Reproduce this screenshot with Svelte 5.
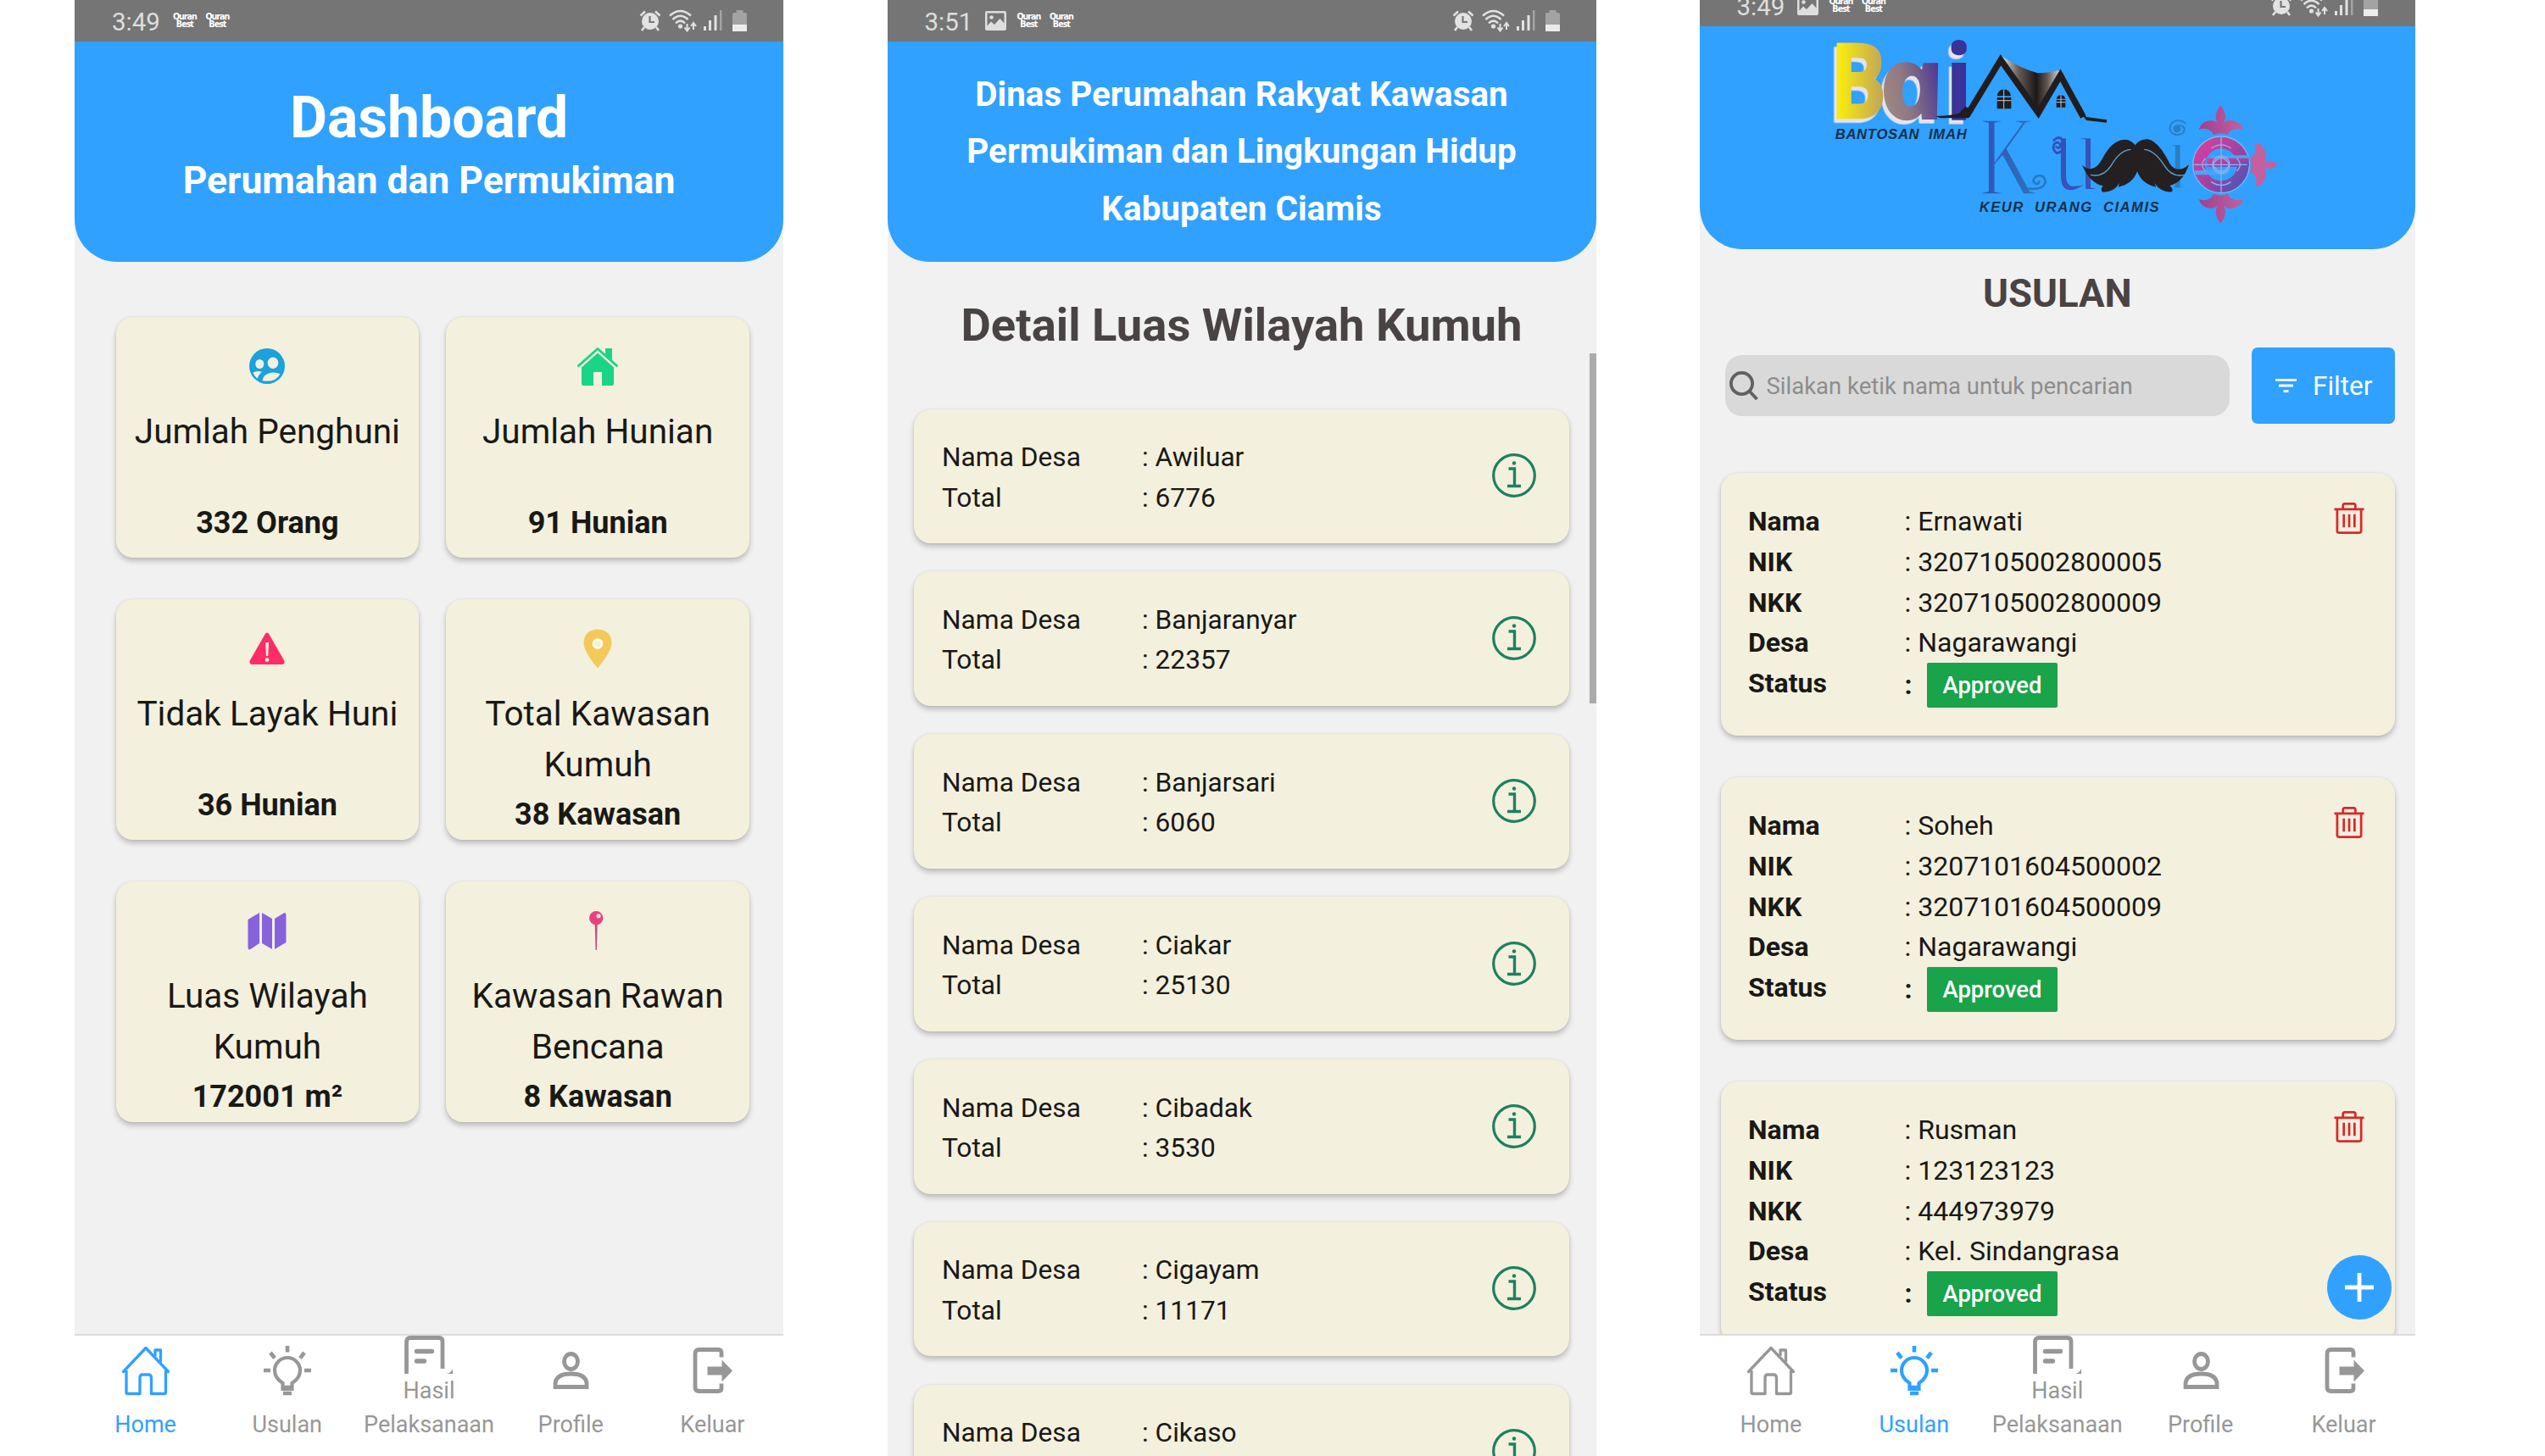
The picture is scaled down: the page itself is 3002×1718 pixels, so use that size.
<script>
  const stats = [
    { icon: 'people', label: ['Jumlah Penghuni'], value: '332 Orang' },
    { icon: 'house', label: ['Jumlah Hunian'], value: '91 Hunian' },
    { icon: 'warning', label: ['Tidak Layak Huni'], value: '36 Hunian' },
    { icon: 'place', label: ['Total Kawasan', 'Kumuh'], value: '38 Kawasan' },
    { icon: 'map', label: ['Luas Wilayah', 'Kumuh'], value: '172001 m²' },
    { icon: 'pushpin', label: ['Kawasan Rawan', 'Bencana'], value: '8 Kawasan' }
  ];

  const villages = [
    { name: 'Awiluar', total: '6776' },
    { name: 'Banjaranyar', total: '22357' },
    { name: 'Banjarsari', total: '6060' },
    { name: 'Ciakar', total: '25130' },
    { name: 'Cibadak', total: '3530' },
    { name: 'Cigayam', total: '11171' },
    { name: 'Cikaso', total: '' }
  ];

  const proposals = [
    { nama: 'Ernawati', nik: '3207105002800005', nkk: '3207105002800009', desa: 'Nagarawangi' },
    { nama: 'Soheh', nik: '3207101604500002', nkk: '3207101604500009', desa: 'Nagarawangi' },
    { nama: 'Rusman', nik: '123123123', nkk: '444973979', desa: 'Kel. Sindangrasa' }
  ];

  const tabs = ['Home', 'Usulan', 'Pelaksanaan', 'Profile', 'Keluar'];
</script>

{#snippet statusBar(time, picture)}
  <div class="status">
    <span class="time">{time}</span>
    {#if picture}
      <svg class="pic" viewBox="0 0 25 23">
        <path fill="#dedede" fill-rule="evenodd" d="M2 0h21q2 0 2 2v19q0 2-2 2H2q-2 0-2-2V2Q0 0 2 0ZM2.500 17.500l4.500-5 4 3.500 6.500-7 5 5.500V2.500H2.500ZM7.500 5.200a2.300 2.300 0 1 1 0 4.600a2.300 2.300 0 0 1 0-4.600Z" />
      </svg>
    {/if}
    <span class="quran"><b>Quran</b><b>Best</b></span>
    <span class="quran"><b>Quran</b><b>Best</b></span>
    <span class="fill"></span>
    <svg class="alarm" viewBox="0 0 26 25">
      <path d="M1.500 6.500 7 1.500M24.500 6.500 19 1.500M6 20l-3 4M20 20l3 4" stroke="#e2e2e2" stroke-width="2.600" fill="none" />
      <circle cx="13" cy="13" r="10" fill="#e2e2e2" />
      <path d="M12.500 7v7h5.500" stroke="#777" stroke-width="2.200" fill="none" />
    </svg>
    <svg class="wifi" viewBox="0 0 33 27">
      <g fill="none" stroke="#e2e2e2" stroke-width="2.500">
        <path d="M1 7.500Q13.500-3.500 26 7.500M4.500 12Q13.500 3.500 22.500 12M8 16.300Q13.500 11 19 16.300" />
      </g>
      <circle cx="13.500" cy="20" r="2.600" fill="#e2e2e2" />
      <path d="M21.500 17v8M18.500 21.500l3 4 3-4M29 24v-8M26 20l3-4 3 4" stroke="#e2e2e2" stroke-width="2" fill="none" />
    </svg>
    <svg class="signal" viewBox="0 0 22 24">
      <path fill="#e2e2e2" d="M0 19h3v5H0zM6 12h3v12H6zM12.500 6h3v18h-3z" />
      <path fill="#a3a3a3" d="M19 0h2.500v24H19z" />
    </svg>
    <svg class="battery" viewBox="0 0 17 25">
      <path fill="#a3a3a3" d="M4.500 0h8v3H15q2 0 2 2v13H0V5q0-2 2-2h2.500z" />
      <path fill="#ececec" d="M0 17h17v8H0z" />
    </svg>
  </div>
{/snippet}

{#snippet statIcon(name)}
  <svg class="stat-icon" viewBox="0 0 48 48">
    {#if name === 'people'}
      <circle cx="24" cy="24" r="21" fill="#1ba1dc" />
      <ellipse cx="31" cy="20.300" rx="6.300" ry="6.800" fill="#f3f0df" />
      <ellipse cx="15.300" cy="21.500" rx="5" ry="5.500" fill="#f3f0df" />
      <path fill="#f3f0df" d="M7.500 31.500q5-2.600 10.500-.700-3.500 2.500-5.500 8-4-3-5-7.300ZM18.500 41.300q1-7 7-8.600 7-2.700 14 .500-5.500 10.500-21 8.100Z" />
    {:else if name === 'house'}
      <path fill="none" stroke="#1ad488" stroke-width="2.800" stroke-linejoin="round" d="M.500 24.500 24 3.500l23.500 21" />
      <path fill="#1ad488" d="M24 8.500 43 25.500V45q0 2-2 2H29V31H19v16H7q-2 0-2-2V25.500ZM33 3h8v14l-8-7z" />
    {:else if name === 'warning'}
      <path fill="#ff2d67" d="M24 5.500q1.500 0 2.500 2L44 38q2 4-2 5H6q-4-1-2-5L21.500 7.500q1-2 2.500-2Z" />
      <path fill="#f3f0df" d="M22.200 17h3.800l-.700 16h-2.400z" /><circle cx="24" cy="37.500" r="2.300" fill="#f3f0df" />
    {:else if name === 'place'}
      <path fill="#f3ca5a" fill-rule="evenodd" d="M24 1.500q16.500 1 16.500 17Q40 28 24 47.500 8 28 7.500 18.500q0-16 16.500-17Zm0 11.500a5.500 5.500 0 1 0 0 11a5.500 5.500 0 0 0 0-11Z" />
      <circle cx="24" cy="18.500" r="5" fill="none" stroke="#fffbe8" stroke-width="2.600" />
    {:else if name === 'map'}
      <path fill="#8762dc" d="M1.500 11 15 3v36L4.500 46q-3 1.500-3-2ZM18 3l12 7v36l-12-7ZM33 10l10.500-6.500Q46.500 2 46.500 6v32L33 46Z" />
    {:else}
      <path fill="#c24b86" d="M20.700 14h3l-.800 33h-1.400z" />
      <circle cx="22.200" cy="9.300" r="8.200" fill="#e8437e" /><circle cx="25" cy="6.800" r="2.600" fill="#fbd5e2" />
    {/if}
  </svg>
{/snippet}

{#snippet navBar(active)}
  <nav class="nav">
    {#each tabs as tab}
      <div class={['tab', { active: tab === active, double: tab === 'Pelaksanaan' }]}>
        {#if tab === 'Home'}
          <svg class="tab-icon" viewBox="0 0 56 58" fill="none" stroke="currentColor" stroke-width="3.300" stroke-linejoin="round">
            <path d="M5 29v26q0 1.500 1.500 1.500H21V38q0-4 3-4h7q3.500 0 3.500 4v18.500H50q1.500 0 1.500-1.500V29" />
            <path d="M1.500 30.500 28 2.500l26.500 28" stroke-linecap="round" />
            <path d="M39 12V5h6.500v14.500" />
          </svg>
        {:else if tab === 'Usulan'}
          <svg class="tab-icon" viewBox="0 0 56 58" fill="none" stroke="currentColor" stroke-width="4.600">
            <path d="M22.500 51v-7q-9.500-6-9.500-15a15 15 0 0 1 30 0q0 9-9.500 15v7Z" stroke-width="4.200" />
            <path d="M23 49h10M23 56h10M28 0v7.500M8 8l5 6.500M48 8l-5 6.500M0 29h8M48 29h8" />
          </svg>
        {:else if tab === 'Pelaksanaan'}
          <svg class="doc-icon" viewBox="0 0 58 45" fill="none" stroke="currentColor" stroke-width="4.800">
            <path d="M2.500 45V7q0-4.500 4.500-4.500h34q4 0 4 4.500v32" />
            <path d="M14.500 18.500h18M14.500 30h9" stroke-width="5.400" stroke-linecap="round" />
            <path d="M49 45q6-.500 8-6v6Z" fill="currentColor" stroke="none" />
          </svg>
        {:else if tab === 'Profile'}
          <svg class="tab-icon" viewBox="0 0 56 58" fill="none" stroke="currentColor" stroke-width="4.800">
            <ellipse cx="28.500" cy="18.500" rx="8" ry="9" />
            <path d="M10 48.500v-4.500q1.500-11 18.500-11t18.500 11v4.500Z" />
          </svg>
        {:else}
          <svg class="tab-icon" viewBox="0 0 56 58" fill="none" stroke="currentColor" stroke-width="4.800">
            <path d="M39 13.500V8q0-3.500-4-3.500H12.500Q8 4.500 8 9v40q0 4.500 4.500 4.500H35q4 0 4-3.500v-5.500" />
            <path d="M22.500 24.500h17v-8L52 29.500 39.500 42.500v-8h-17Z" fill="currentColor" stroke="none" />
          </svg>
        {/if}
        {#if tab === 'Pelaksanaan'}<span>Hasil</span>{/if}
        <span>{tab}</span>
      </div>
    {/each}
  </nav>
{/snippet}

<div class="stage">
  <section class="phone home">
    {@render statusBar('3:49', false)}
    <header class="banner">
      <h1>Dashboard</h1>
      <h2>Perumahan dan Permukiman</h2>
    </header>
    <div class="stats">
      {#each stats as s}
        <article class="card stat">
          {@render statIcon(s.icon)}
          <div class="stat-label">
            {#each s.label as line}<span>{line}</span>{/each}
          </div>
          <strong class={{ low: s.label.length === 1 }}>{s.value}</strong>
        </article>
      {/each}
    </div>
    {@render navBar('Home')}
  </section>

  <section class="phone detail">
    {@render statusBar('3:51', true)}
    <header class="banner agency">
      <span>Dinas Perumahan Rakyat Kawasan</span>
      <span>Permukiman dan Lingkungan Hidup</span>
      <span>Kabupaten Ciamis</span>
    </header>
    <h3 class="detail-title">Detail Luas Wilayah Kumuh</h3>
    <div class="villages">
      {#each villages as v}
        <article class="card village">
          <dl>
            <dt>Nama Desa</dt><dd>: {v.name}</dd>
            {#if v.total}<dt>Total</dt><dd>: {v.total}</dd>{/if}
          </dl>
          <svg class="info" viewBox="0 0 52 52" fill="none" stroke="#1c8160" stroke-width="3.200">
            <circle cx="26" cy="26" r="24.300" />
            <path d="M19.500 18h7v20M18 38.500h16" stroke-width="3.400" />
            <circle cx="26" cy="11.500" r="2.200" fill="#1c8160" stroke="none" />
          </svg>
        </article>
      {/each}
    </div>
    <div class="thumb"></div>
  </section>

  <section class="phone usulan">
    <div class="clip">{@render statusBar('3:49', true)}</div>
    <header class="banner brand">
      <svg class="logo" viewBox="0 0 1584 675">
        <defs>
          <linearGradient id="bai" gradientUnits="userSpaceOnUse" x1="30" y1="0" x2="475" y2="0">
            <stop offset="0" stop-color="#f8ea10" /><stop offset=".3" stop-color="#c8ae50" />
            <stop offset=".5" stop-color="#9c8580" /><stop offset=".75" stop-color="#634a8c" />
            <stop offset="1" stop-color="#2c2a98" />
          </linearGradient>
          <linearGradient id="letter-a" x1="0" y1="0" x2="1" y2="0">
            <stop offset="0" stop-color="#a08a80" /><stop offset=".4" stop-color="#8f7884" /><stop offset="1" stop-color="#4b3892" />
          </linearGradient>
          <linearGradient id="letter-k" x1="0" y1="0" x2="1" y2="0">
            <stop offset="0" stop-color="#3450b3" /><stop offset="1" stop-color="#2a76bc" />
          </linearGradient>
          <linearGradient id="roof" x1="0" y1="0" x2="1" y2="0">
            <stop offset="0" stop-color="#eee" /><stop offset=".3" stop-color="#675d58" /><stop offset=".6" stop-color="#1c1718" />
            <stop offset=".78" stop-color="#625650" /><stop offset="1" stop-color="#ddd" />
          </linearGradient>
          <linearGradient id="orn" x1="0" y1="0" x2="1" y2="1">
            <stop offset="0" stop-color="#d83f9d" /><stop offset=".55" stop-color="#a043a0" /><stop offset="1" stop-color="#4a55b8" />
          </linearGradient>
          <linearGradient id="fleur" x1="0" y1="0" x2="1" y2="0">
            <stop offset="0" stop-color="#a0408f" /><stop offset="1" stop-color="#c2609e" />
          </linearGradient>
        </defs>
        <g class="wordmark">
          <text class="b" x="-4" y="298" textLength="200" lengthAdjust="spacingAndGlyphs" fill="url(#bai)" stroke="url(#bai)">B</text>
          <g transform="translate(190 300) skewX(12)">
            <text class="a" x="0" y="0" textLength="232" lengthAdjust="spacingAndGlyphs" fill="url(#letter-a)" stroke="url(#letter-a)">a</text>
          </g>
          <text class="i" x="402" y="302" textLength="100" lengthAdjust="spacingAndGlyphs" fill="#3a339a">i</text>
        </g>

        <path fill="#211d1e" d="M370 293q55-2 82-10l22-24 30 13-18 28H385ZM872 268l31 40 72 8v-10l-72-10-20-28Z" transform="translate(0 -2)" />
        <path fill="url(#roof)" d="M598 76q75 48 133 63 45-2 80-11l-78 150Z" />
        <path fill="none" stroke="#211d1e" stroke-width="22" d="M480 290 600 92 733 280 811 146 892 294" />
        <path fill="#211d1e" d="M587 265v-40h50v40zM587 220q3-22 24-24 22 2 25 24zM797 260v-26h32v26zM797 230q3-13 16-14 13 1 16 14z" />
        <path stroke="#bcd" stroke-width="3" d="M611 196v69M587 236h50M813 216v44M797 242h32" />

        <text class="tag" x="14" y="373" textLength="465">BANTOSAN&#160; IMAH</text>
        <text class="tag" x="524" y="629" textLength="636">KEUR&#160; URANG&#160; CIAMIS</text>

        <text class="curly k" x="522" y="569" textLength="206" lengthAdjust="spacingAndGlyphs">K</text>
        <text class="curly u" x="786" y="555" textLength="160" lengthAdjust="spacingAndGlyphs">u</text>
        <text class="curly s" x="1180" y="549" textLength="92" lengthAdjust="spacingAndGlyphs">i</text>
        <g fill="none" stroke-linecap="round" stroke-width="8">
          <path stroke="#2a78bd" d="M700 548q56 4 58-26-5-27-32-18-18 12-5 25 13 6 15-7" />
          <path stroke="#3350b8" d="M797 400q10 10 15-6-8-16-22-5-10 19 8 33 29-5 26-38-15-30-36-7" />
          <path stroke="#2b7fc0" stroke-width="6" d="M1253 316q-25-20-48 0-17 30 14 41 33 2 31-24-15-17-27-2 0 13 12 9" />
        </g>

        <path fill="#241f20" d="M1083 404Q1060 366 1022 377 986 388 958 445 928 499 888 464q26 63 74 74-12 15 0 22 40 0 58-32l-4 14q50-10 67-55 17 45 67 55l-6-14q24 34 60 31 10-6-6-22 46-10 68-74-42 35-68-4-38-78-76-86-34-4-53 31Z" />
        <path fill="none" stroke="#58a6e2" stroke-width="4" d="M918 499q45 10 72-32 32-56 70-58M1250 499q-45 10-70-32-36-56-72-58" />

        <circle cx="1380" cy="463" r="78" fill="none" stroke="url(#orn)" stroke-width="42" />
        <circle cx="1380" cy="463" r="100" fill="none" stroke="#78b8f5" stroke-width="4" />
        <path fill="#4ba4f5" d="M1345 430h135v11h-135zM1285 483h130l-15 16H1290z" />
        <path fill="url(#orn)" d="M1330 440h148v30h-148z" />
        <g fill="none" stroke="#8fb2ee" stroke-width="4">
          <circle cx="1380" cy="463" r="30" /><path d="M1282 463h190M1380 366v195M1350 463q30-48 60 0-30 48-60 0M1345 405q35-25 70 0M1345 523q35 25 70 0M1325 440q-24 23 0 46M1435 440q24 23 0 46" />
        </g>
        <g fill="url(#fleur)">
          <path d="M1378 253q28 35 10 65 20-28 66 6l4 14q-42-10-56 20-22-12-48 0-14-30-53-20 12-34 47-31 15 2 20 11-18-30 10-65Z" />
          <path d="M1378 671q28-35 10-65 20 28 66-6l4-14q-42 10-56-20-22 12-48 0-14 30-53 20 12 34 47 31 15-2 20-11-18 30 10 65Z" />
          <path fill="#c5609f" d="M1580 463q-26-23-48-8 20-38-18-68l-16 3q12 36-16 46 8 26 0 52 28 10 20 50l12 2q38-32 18-70 22 18 48-7Z" />
        </g>
      </svg>
    </header>
    <h3 class="usulan-title">USULAN</h3>
    <div class="tools">
      <div class="search">
        <svg viewBox="0 0 34 34" fill="none" stroke="#606060" stroke-width="3.800"><circle cx="14.500" cy="14.500" r="12.600" /><path d="m23.500 23.500 9 9.500" /></svg>
        <span>Silakan ketik nama untuk pencarian</span>
      </div>
      <div class="filter">
        <svg viewBox="0 0 25 16" fill="#fff"><path d="M0 0h25v2.800H0zM4 6.600h17v2.800H4zM9.500 13.200h6V16h-6z" /></svg>
        <span>Filter</span>
      </div>
    </div>
    <div class="proposals">
      {#each proposals as p}
        <article class="card proposal">
          <dl>
            <dt>Nama</dt><dd>: {p.nama}</dd>
            <dt>NIK</dt><dd>: {p.nik}</dd>
            <dt>NKK</dt><dd>: {p.nkk}</dd>
            <dt>Desa</dt><dd>: {p.desa}</dd>
            <dt>Status</dt><dd class="state"><b>:</b><em>Approved</em></dd>
          </dl>
          <svg class="trash" viewBox="0 0 36 38" fill="none" stroke="#d8292b" stroke-width="2.800">
            <path d="M0 8h36M3.500 8v26.500q0 2 2 2h25q2 0 2-2V8M10.500 7V3.500q0-2 2-2h11q2 0 2 2V7M11.500 14v16M18 14v16M24.500 14v16" />
          </svg>
        </article>
      {/each}
    </div>
    <div class="fab"><svg viewBox="0 0 36 36" stroke="#fff" stroke-width="4.800"><path d="M18 1v34M1 18h34" /></svg></div>
    {@render navBar('Usulan')}
  </section>
</div>

<style>
  :global(body) { background: #fff; overflow: hidden; }
  .stage {
    width: 3002px; height: 1718px; box-sizing: border-box; padding-left: 88px;
    display: flex; gap: 122.500px; overflow: hidden; background: #fff;
    font-family: Roboto, "Liberation Sans", sans-serif; color: #191915;
  }
  .phone { position: relative; flex: none; width: 836px; height: 1718px; overflow: hidden; background: #f1f1f1; display: flex; flex-direction: column; }
  .usulan { width: 844.500px; margin-left: -.500px; }
  .status {
    flex: none; height: 48.500px; box-sizing: border-box; padding: 0 43px 0 44px; background: #757575;
    display: flex; align-items: center; color: #dedede;
  }
  .usulan .status { padding-right: 44.500px; }
  .clip { flex: none; height: 30.500px; display: flex; flex-direction: column; justify-content: flex-end; overflow: hidden; }
  .time { font-size: 29.500px; line-height: 40px; padding-top: 3px; margin-right: 15px; }
  .pic { width: 25px; height: 23px; margin-right: 12px; }
  .quran { display: flex; flex-direction: column; align-items: center; width: 28px; margin-right: 10.500px; font: 700 9.600px/9px "DejaVu Sans", "Liberation Sans", sans-serif; letter-spacing: -1px; color: #fff; }
  .fill { flex: 1; }
  .alarm { width: 26px; height: 25px; margin-right: 9px; }
  .wifi { width: 33px; height: 27px; margin-right: 8px; }
  .signal { width: 22px; height: 24px; margin-right: 12px; }
  .battery { width: 17px; height: 25px; }

  .banner {
    flex: none; height: 260px; box-sizing: border-box; background: #30a1ff; color: #fff;
    border-radius: 0 0 50px 50px; display: flex; flex-direction: column; align-items: center;
  }
  h1, h2, h3, dl, dd { margin: 0; }
  h1 { font-size: 67.800px; line-height: 80px; margin-top: 50px; }
  h2 { font-size: 44.500px; line-height: 60px; margin-top: 4px; }

  .card { background: #f4f0de; border-radius: 20px; box-shadow: 0 4px 6px rgba(0, 0, 0, .22), 0 0 3px rgba(0, 0, 0, .08); box-sizing: border-box; }
  .stats { flex: 1; padding: 65px 40px 0 48.500px; display: grid; grid-template-columns: 1fr 1fr; grid-auto-rows: 284px; gap: 49px 32px; }
  .stat { display: flex; flex-direction: column; align-items: center; padding-top: 34.500px; }
  .stat-icon { width: 48px; height: 48px; }
  .stat-label { margin-top: 23px; display: flex; flex-direction: column; align-items: center; font-size: 40.500px; line-height: 60px; white-space: nowrap; }
  .stat strong { font-size: 36px; line-height: 50px; margin-top: 3.500px; }
  .stat strong.low { margin-top: 53px; }

  .nav { flex: none; position: relative; margin-top: auto; height: 144px; background: #fff; border-top: 2px solid #dcdcdc; box-sizing: border-box; display: grid; grid-template-columns: repeat(5, 1fr); font-size: 27px; line-height: 40px; color: #979797; }
  .tab { display: flex; flex-direction: column; align-items: center; padding-top: 12px; }
  .tab span { white-space: nowrap; }
  .tab-icon { width: 56px; height: 58px; margin-bottom: 15px; overflow: visible; }
  .tab.active { color: #30a1ff; }
  .tab.double { padding-top: 0; }
  .doc-icon { width: 58px; height: 45px; margin-bottom: 0; }

  .agency { padding-top: 29.500px; font-weight: 700; font-size: 40.400px; line-height: 67.300px; }
  .detail-title { text-align: center; font-size: 54.400px; line-height: 70px; margin-top: 40px; color: #4a4343; }
  .villages { padding: 64px 32px 0 31.500px; display: flex; flex-direction: column; gap: 33.400px; }
  .village { flex: none; height: 158.500px; padding: 33.500px 39px 0 33px; display: flex; align-items: flex-start; justify-content: space-between; }
  .village dl { display: grid; grid-template-columns: 236px auto; font-size: 31.700px; line-height: 47.500px; }
  .info { width: 52px; height: 52px; margin-top: 19px; }
  .thumb { position: absolute; right: 0; top: 417px; width: 8px; height: 413px; background: #ababab; }

  .brand { height: 263px; }
  .logo { width: 528px; height: 225px; margin: 9.500px 0 0 -5px; overflow: visible; }
  .wordmark { filter: drop-shadow(-10px 14px 0 #e6e3ee); }
  .b { font: 700 365px "Open Sans", "Noto Sans", sans-serif; stroke-width: 8px; }
  .a { font: italic 700 355px "Noto Sans", "Open Sans", sans-serif; stroke-width: 6px; }
  .i { font: 700 370px "Noto Sans", "Open Sans", sans-serif; }
  .curly { font-family: "Liberation Serif", serif; stroke: #30a1ff; stroke-width: 10px; }
  .k { font-size: 405px; fill: url(#letter-k); }
  .u { font-size: 410px; fill: #3653b9; }
  .s { font-size: 350px; fill: #2b7fc0; }
  .tag { font: italic 700 50px "Liberation Sans", Arial, sans-serif; fill: #17304a; }
  .usulan-title { text-align: center; font-size: 45.500px; line-height: 60px; margin-top: 23px; color: #4a4343; }
  .tools { flex: none; margin-top: 33.500px; padding: 0 24px 0 30px; display: flex; align-items: center; justify-content: space-between; height: 90px; }
  .search { width: 595px; height: 72px; border-radius: 20px; background: #d9d9d9; box-sizing: border-box; padding-left: 5px; display: flex; align-items: center; color: #8d8d8d; font-size: 27.500px; }
  .search svg { width: 34px; height: 34px; margin-right: 10px; }
  .filter { width: 169px; height: 90px; border-radius: 7px; background: #30a1ff; box-sizing: border-box; padding-left: 28px; display: flex; align-items: center; color: #fff; font-size: 31.500px; }
  .filter svg { width: 25px; height: 16px; margin-right: 19px; }
  .proposals { flex: 1; min-height: 0; overflow: hidden; padding: 58px 24px 0 25px; display: flex; flex-direction: column; gap: 49.500px; }
  .proposal { flex: none; height: 309.500px; padding: 34px 36px 0 32.500px; display: flex; justify-content: space-between; align-items: flex-start; }
  .proposal dl { display: grid; grid-template-columns: 184.500px auto; font-size: 32px; line-height: 47.800px; }
  .proposal dt { font-weight: 700; }
  .state { display: flex; align-items: flex-start; }
  .state b { padding-top: 2px; width: 26px; }
  .state em { height: 53px; margin-top: -1px; padding: 0 19px; font-style: normal; font-weight: 500; font-size: 27.400px; line-height: 55px; color: #fff; background: #19a34a; border-radius: 2px; }
  .trash { width: 36px; height: 37px; margin-top: 1px; }
  .fab { position: absolute; right: 28px; top: 1481px; width: 76px; height: 76px; border-radius: 50%; background: #30a1ff; display: flex; align-items: center; justify-content: center; }
  .fab svg { width: 36px; height: 36px; }
</style>
